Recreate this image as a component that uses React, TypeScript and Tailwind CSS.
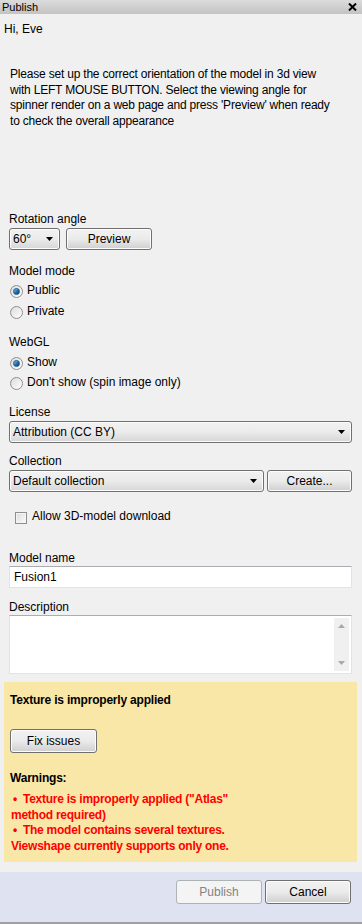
import { ReactNode } from 'react'

function Radio({ checked, label }: { checked?: boolean; label: string }) {
  return (
    <div className="flex items-center h-[15px] gap-[4px] pl-[1px]">
      <div className="w-[13px] h-[13px] rounded-full border border-[#8e8f8f] bg-gradient-to-br from-[#dcdcdc] to-[#ffffff] flex items-center justify-center">
        {checked && (
          <div className="w-[7px] h-[7px] rounded-full bg-gradient-to-br from-[#8fd0f5] via-[#1f74b8] to-[#0b3f7a] border border-[#1c5180]" />
        )}
      </div>
      <span className="relative -top-[1px]">{label}</span>
    </div>
  )
}

function Button({ children, className = '', disabled }: { children: ReactNode; className?: string; disabled?: boolean }) {
  return (
    <div
      className={
        'flex items-center justify-center rounded-[3px] border ' +
        (disabled
          ? 'border-[#adb2b5] bg-[#f4f4f4] text-[#838383] '
          : 'border-[#707070] bg-gradient-to-b from-[#f2f2f2] via-[#ebebeb] to-[#cfcfcf] shadow-[inset_0_0_0_1px_#fcfcfc] ') +
        className
      }
    >
      {children}
    </div>
  )
}

function Arrow() {
  return (
    <svg width="7" height="4" viewBox="0 0 7 4">
      <path d="M0 0H7L3.5 4Z" fill="#000" />
    </svg>
  )
}

function Select({ value, className = '' }: { value: string; className?: string }) {
  return (
    <div
      className={
        'flex items-center justify-between rounded-[3px] border border-[#707070] bg-gradient-to-b from-[#f2f2f2] via-[#ebebeb] to-[#d6d6d6] shadow-[inset_0_0_0_1px_#fcfcfc] pl-[3px] pr-[6px] ' +
        className
      }
    >
      <span>{value}</span>
      <Arrow />
    </div>
  )
}

export default function App() {
  return (
    <div className="w-[362px] h-[924px] bg-[#f0f0f0] flex flex-col font-['Liberation_Sans',Arial,sans-serif] text-[12px] leading-[15px] text-black overflow-hidden">
      {/* title bar */}
      <div className="h-[14px] bg-gradient-to-b from-[#dcdcdc] to-[#c3c3c3] flex items-center justify-between pl-[2px] pr-[5px]">
        <span className="text-[11px] leading-[14px]">Publish</span>
        <svg width="9" height="8" viewBox="0 0 9 8">
          <path d="M1 0.5L8 7.5M8 0.5L1 7.5" stroke="#000" strokeWidth="2" />
        </svg>
      </div>

      <div className="flex-1 flex flex-col">
        <div className="pl-[4px] mt-[8px]">Hi, Eve</div>

        <p className="pl-[10px] mt-[30px] leading-[15.5px] tracking-[-0.2px]">
          Please set up the correct orientation of the model in 3d view
          <br />
          with LEFT MOUSE BUTTON. Select the viewing angle for
          <br />
          spinner render on a web page and press 'Preview' when ready
          <br />
          to check the overall appearance
        </p>

        <div className="pl-[9px] pr-[10px] flex flex-col">
          <div className="mt-[83px]">Rotation angle</div>
          <div className="mt-[1px] flex gap-[6px]">
            <Select value="60°" className="w-[51px] h-[22px]" />
            <Button className="w-[86px] h-[22px]">Preview</Button>
          </div>

          <div className="mt-[14px]">Model mode</div>
          <div className="mt-[5px] flex flex-col gap-[6px]">
            <Radio checked label="Public" />
            <Radio label="Private" />
          </div>

          <div className="mt-[15px]">WebGL</div>
          <div className="mt-[6px] flex flex-col gap-[5px]">
            <Radio checked label="Show" />
            <Radio label="Don't show (spin image only)" />
          </div>

          <div className="mt-[14px]">License</div>
          <Select value="Attribution (CC BY)" className="mt-[1px] h-[22px]" />

          <div className="mt-[11px]">Collection</div>
          <div className="mt-[1px] flex gap-[3px]">
            <Select value="Default collection" className="flex-1 h-[22px]" />
            <Button className="w-[85px] h-[22px]">Create...</Button>
          </div>

          <div className="mt-[18px] flex items-center gap-[5px] pl-[6px] h-[15px]">
            <div className="w-[12px] h-[12px] border border-[#8e8f8f] bg-gradient-to-br from-[#dcdcdc] to-[#fbfbfb] shadow-[inset_0_0_0_1px_#f4f4f4]" />
            <span className="relative -top-[1px]">Allow 3D-model download</span>
          </div>

          <div className="mt-[26px]">Model name</div>
          <div className="h-[22px] bg-white border border-[#e2e3ea] border-t-[#abadb3] flex items-center pl-[4px]">
            Fusion1
          </div>

          <div className="mt-[12px]">Description</div>
          <div className="h-[59px] bg-white border border-[#e2e3ea] border-t-[#abadb3] flex justify-end p-[2px]">
            <div className="w-[15px] bg-[#f0f0f0] flex flex-col justify-between items-center py-[6px]">
              <svg width="7" height="4" viewBox="0 0 7 4">
                <path d="M0 4H7L3.5 0Z" fill="#a8a8a8" />
              </svg>
              <svg width="7" height="4" viewBox="0 0 7 4">
                <path d="M0 0H7L3.5 4Z" fill="#a8a8a8" />
              </svg>
            </div>
          </div>
        </div>

        {/* warnings panel */}
        <div className="mt-[8px] ml-[4px] mr-[5px] h-[180px] bg-[#f9e7a7] px-[6px] pt-[11px]">
          <div className="font-bold tracking-[-0.2px]">Texture is improperly applied</div>
          <Button className="mt-[21px] w-[87px] h-[24px]">Fix issues</Button>
          <div className="mt-[18px] font-bold tracking-[-0.2px]">Warnings:</div>
          <div className="mt-[6px] font-bold text-[#ff0000] leading-[15.5px] tracking-[-0.25px] pl-[1px]">
            <span className="pl-[2px] pr-[6px]">•</span>Texture is improperly applied ("Atlas"
            <br />
            method required)
            <br />
            <span className="pl-[2px] pr-[6px]">•</span>The model contains several textures.
            <br />
            Viewshape currently supports only one.
          </div>
        </div>
      </div>

      {/* bottom bar */}
      <div className="mt-[10px] h-[50px] bg-[#dfe3f1] flex justify-end gap-[3px] pr-[11px] pt-[8px]">
        <Button disabled className="w-[86px] h-[24px]">Publish</Button>
        <Button className="w-[86px] h-[24px]">Cancel</Button>
      </div>
      <div className="h-[2px] bg-[#a0a0a0]" />
    </div>
  )
}
